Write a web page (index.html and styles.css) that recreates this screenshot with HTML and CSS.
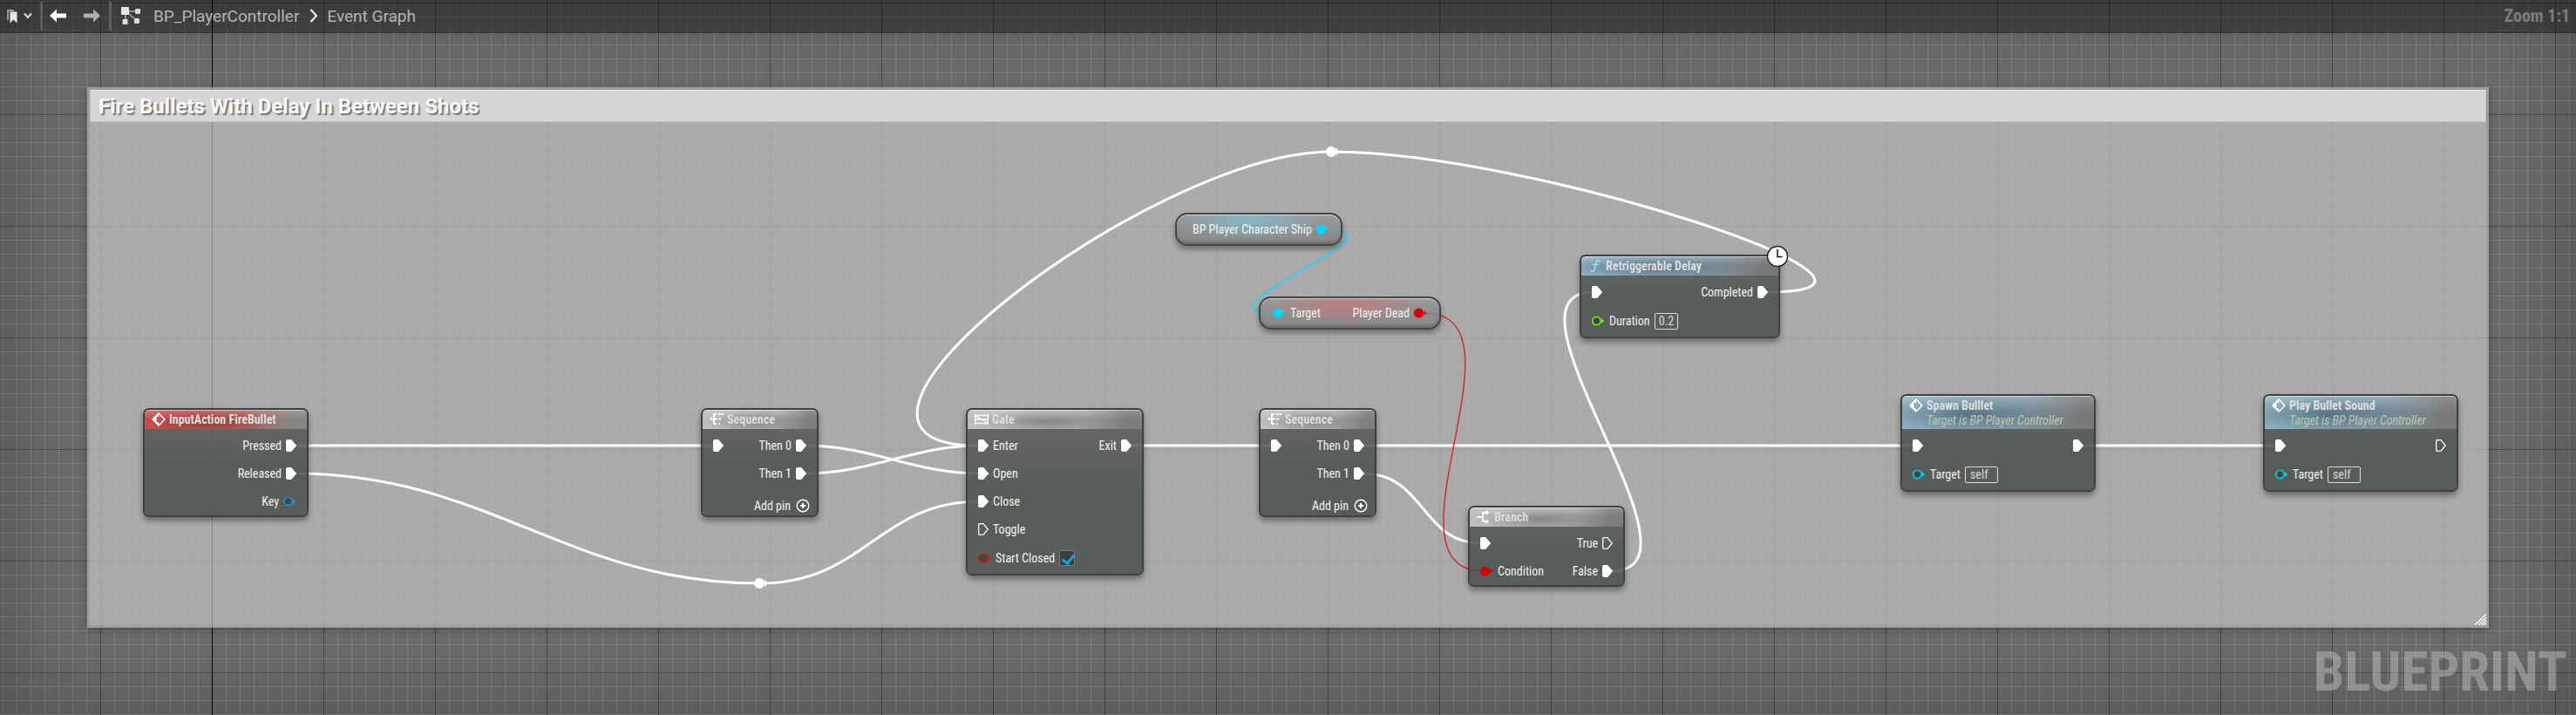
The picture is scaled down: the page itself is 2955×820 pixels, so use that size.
FILE: index.html
```html
<!DOCTYPE html>
<html lang="en">
<head>
<meta charset="utf-8">
<meta name="viewport" content="width=device-width, initial-scale=1">
<title>BP_PlayerController - Event Graph</title>
<link rel="stylesheet" href="styles.css">
</head>
<body>
<svg class="defs" aria-hidden="true">
  <symbol id="exec" viewBox="0 0 12 14"><path d="M1.6 0.5H6.2L11.6 7L6.2 13.5H1.6Q.5 13.5 .5 12.4V1.6Q.5 .5 1.6 .5Z" fill="#fff" stroke="#fff"/></symbol>
  <symbol id="exec-open" viewBox="0 0 12 14"><path d="M1.8 .7H6L11.2 7L6 13.3H1.8Q.7 13.3 .7 12.2V1.8Q.7 .7 1.8 .7Z" fill="none" stroke="#fff" stroke-width="1.3"/></symbol>
  <symbol id="data" viewBox="0 0 15 12"><circle cx="5.5" cy="6" r="4.6" fill="#3c4643" stroke="currentColor" stroke-width="1.8"/><path d="M11 3L14.5 6L11 9Z" fill="currentColor"/></symbol>
  <symbol id="data-on" viewBox="0 0 15 12"><circle cx="5.5" cy="6" r="5.5" fill="currentColor"/><path d="M11.6 3L14.5 6L11.6 9Z" fill="currentColor"/></symbol>
  <symbol id="event" viewBox="0 0 16 16"><path d="M8 1L15 8L8 15L1 8Z" fill="none" stroke="#fff" stroke-width="1.5" stroke-linejoin="round"/><path d="M8 1.2V5H5.6V11H8V14.8L1 8Z" fill="#fff"/><path d="M8 5L11 8L8 11Z" fill="#fff" opacity=".15"/></symbol>
  <symbol id="sequence" viewBox="0 0 16 16"><path d="M0 7.5H5M5 2H8M5 7.5H9M5 13H8M5 1V14M10 2H12.500M13.500 2H16M10.500 7.500H13M10 13H11.500" fill="none" stroke="#fff" stroke-width="2"/></symbol>
  <symbol id="gate" viewBox="0 0 16 16"><path d="M.7 2V14M15.300 2V14M.7 3.500H15.300M.7 12.500H15.300M.7 8H15.300M1 4L15 12" fill="none" stroke="#fff" stroke-width="1.300"/></symbol>
  <symbol id="branch" viewBox="0 0 16 16"><path d="M0 8H6M11 3H7V13H11" fill="none" stroke="#fff" stroke-width="2"/><path d="M10.500 0L14.500 3L10.500 6ZM10.500 10L14.500 13L10.500 16Z" fill="#fff"/></symbol>
  <symbol id="func" viewBox="0 0 16 16"><path d="M13 2.500C11 1 9.500 2 9 4.500L7.300 11.500C6.700 14 5 14.700 3.200 13.500M5 6.500H11.500" fill="none" stroke="#9fdcff" stroke-width="1.600" stroke-linecap="round"/></symbol>
  <symbol id="plus" viewBox="0 0 16 16"><circle cx="8" cy="8" r="6.800" fill="none" stroke="#fff" stroke-width="1.400"/><path d="M8 5V11M5 8H11" stroke="#fff" stroke-width="2"/></symbol>
</svg>

<div class="editor">
  <header class="toolbar">
    <button class="tool bookmarks" aria-label="Bookmarks">
      <svg width="12" height="17" viewBox="0 0 12 17"><path d="M0 1H8V3H2V12L0 14Z" fill="#9a9a9a"/><path d="M3.500 3.500H11.500V16.500L7.500 12.500L3.500 16.500Z" fill="#e8e8e8"/></svg>
      <svg width="10" height="8" viewBox="0 0 10 8"><path d="M1 1.500L5 6L9 1.500" fill="none" stroke="#e0e0e0" stroke-width="2"/></svg>
    </button>
    <span class="divider"></span>
    <button class="tool" aria-label="Back"><svg width="20" height="16" viewBox="0 0 20 16"><path d="M0 8L8 .5V5.500H19V10.500H8V15.500Z" fill="#fff"/></svg></button>
    <button class="tool" aria-label="Forward"><svg width="20" height="16" viewBox="0 0 20 16"><path d="M19 8L11 .5V5.500H0V10.500H11V15.500Z" fill="#b0b0b0"/></svg></button>
    <span class="divider"></span>
    <nav class="crumbs" aria-label="Breadcrumb">
      <svg width="22" height="20" viewBox="0 0 22 20"><path d="M5 5L19 5M5 5V17M6 5L18 16" stroke="#a8a8a8" stroke-width="1.500"/><rect width="9" height="9" rx="1" fill="#e6e6e6"/><rect x="16" y="2" width="6" height="6" rx="1" fill="#dcdcdc"/><rect x="1.500" y="14" width="6" height="6" rx="1" fill="#dcdcdc"/><rect x="15" y="13" width="6" height="6" rx="1" fill="#dcdcdc"/></svg>
      <a class="crumb" href="#">BP_PlayerController</a>
      <svg width="10" height="16" viewBox="0 0 10 16"><path d="M1.500 1L8 8L1.500 15" fill="none" stroke="#fff" stroke-width="2"/></svg>
      <a class="crumb" href="#">Event Graph</a>
    </nav>
    <span class="zoom">Zoom 1:1</span>
  </header>

  <main class="canvas">
    <section class="comment">
      <h1 class="comment-title">Fire Bullets With Delay In Between Shots</h1>
      <svg class="grip" width="13" height="13" viewBox="0 0 13 13"><path d="M0 13L13 0M4 13L13 4M7.500 13L13 7.500M10.500 13L13 10.500" stroke="#fff" stroke-width="1.300"/></svg>
    </section>

    <svg class="wires" aria-hidden="true">
      <g class="wire-exec">
        <path d="M338 511H820"/>
        <path d="M338 543C559 543 652 669 871 669"/>
        <path d="M871 669C992 669 1008 575 1124 575"/>
        <path d="M923 511C1000 511 1048 543 1124 543"/>
        <path d="M923 543C1000 543 1048 511 1124 511"/>
        <path d="M2028 335C2244 335 1757 174 1527 174"/>
        <path d="M1527 174C1320 174 882 511 1122 511"/>
        <path d="M1296 511H1460"/>
        <path d="M1563 511H2196"/>
        <path d="M1563 543C1636 543 1629 623 1700 623"/>
        <path d="M1848 655C1973 655 1705 335 1828 335"/>
        <path d="M2388 511H2612"/>
      </g>
      <path class="wire-bool" d="M1634 359C1760 359 1577 655 1702 655"/>
      <path class="wire-object" d="M1520 263C1627 263 1357 359 1462 359"/>
      <g class="knots"><circle cx="871" cy="669" r="6"/><path d="M877 664L880 669L877 674Z"/><circle cx="1527" cy="174" r="6"/><path d="M1533 169L1536 174L1533 179Z"/></g>
    </svg>

    <article class="node fire">
      <h2 class="head red"><svg class="icon"><use href="#event"/></svg>InputAction FireBullet</h2>
      <div class="body">
        <div class="col out">
          <div class="pin">Pressed<svg class="exec"><use href="#exec"/></svg></div>
          <div class="pin">Released<svg class="exec"><use href="#exec"/></svg></div>
          <div class="pin">Key<svg class="data blue"><use href="#data"/></svg></div>
        </div>
      </div>
    </article>

    <article class="node seq-a">
      <h2 class="head gray"><svg class="icon"><use href="#sequence"/></svg>Sequence</h2>
      <div class="body">
        <div class="col"><div class="pin"><svg class="exec"><use href="#exec"/></svg></div></div>
        <div class="col out">
          <div class="pin">Then 0<svg class="exec"><use href="#exec"/></svg></div>
          <div class="pin">Then 1<svg class="exec"><use href="#exec"/></svg></div>
          <button class="add">Add pin<svg class="icon"><use href="#plus"/></svg></button>
        </div>
      </div>
    </article>

    <article class="node gate">
      <h2 class="head gray"><svg class="icon"><use href="#gate"/></svg>Gate</h2>
      <div class="body">
        <div class="col">
          <div class="pin"><svg class="exec"><use href="#exec"/></svg>Enter</div>
          <div class="pin"><svg class="exec"><use href="#exec"/></svg>Open</div>
          <div class="pin"><svg class="exec"><use href="#exec"/></svg>Close</div>
          <div class="pin"><svg class="exec"><use href="#exec-open"/></svg>Toggle</div>
          <div class="pin value"><svg class="data dark-red"><use href="#data"/></svg><label for="closed">Start Closed</label><input class="check" id="closed" type="checkbox" checked></div>
        </div>
        <div class="col out"><div class="pin">Exit<svg class="exec"><use href="#exec"/></svg></div></div>
      </div>
    </article>

    <article class="pill ship">
      <div class="pin">BP Player Character Ship<svg class="data cyan"><use href="#data-on"/></svg></div>
    </article>

    <article class="pill dead">
      <div class="pin"><svg class="data cyan"><use href="#data-on"/></svg>Target</div>
      <div class="pin">Player Dead<svg class="data red-pin"><use href="#data-on"/></svg></div>
    </article>

    <article class="node seq-b">
      <h2 class="head gray"><svg class="icon"><use href="#sequence"/></svg>Sequence</h2>
      <div class="body">
        <div class="col"><div class="pin"><svg class="exec"><use href="#exec"/></svg></div></div>
        <div class="col out">
          <div class="pin">Then 0<svg class="exec"><use href="#exec"/></svg></div>
          <div class="pin">Then 1<svg class="exec"><use href="#exec"/></svg></div>
          <button class="add">Add pin<svg class="icon"><use href="#plus"/></svg></button>
        </div>
      </div>
    </article>

    <article class="node branch">
      <h2 class="head gray"><svg class="icon"><use href="#branch"/></svg>Branch</h2>
      <div class="body">
        <div class="col">
          <div class="pin"><svg class="exec"><use href="#exec"/></svg></div>
          <div class="pin"><svg class="data red-pin"><use href="#data-on"/></svg>Condition</div>
        </div>
        <div class="col out">
          <div class="pin">True<svg class="exec"><use href="#exec-open"/></svg></div>
          <div class="pin">False<svg class="exec"><use href="#exec"/></svg></div>
        </div>
      </div>
    </article>

    <article class="node delay">
      <h2 class="head blue-head"><svg class="icon"><use href="#func"/></svg>Retriggerable Delay</h2>
      <div class="body">
        <div class="col">
          <div class="pin"><svg class="exec"><use href="#exec"/></svg></div>
          <div class="pin value"><svg class="data green"><use href="#data"/></svg><label for="duration">Duration</label><input class="field number" id="duration" type="text" value="0.2"></div>
        </div>
        <div class="col out"><div class="pin">Completed<svg class="exec"><use href="#exec"/></svg></div></div>
      </div>
      <svg class="clock" width="26" height="26" viewBox="0 0 26 26"><circle cx="13" cy="13" r="11.500" fill="#fff" stroke="#222" stroke-width="1.500"/><path d="M13 5V13.500H18.500" fill="none" stroke="#111" stroke-width="1.500"/></svg>
    </article>

    <article class="node spawn">
      <h2 class="head tall blue-head"><svg class="icon"><use href="#event"/></svg>Spawn Bulllet<span class="sub">Target is BP Player Controller</span></h2>
      <div class="body">
        <div class="col">
          <div class="pin"><svg class="exec"><use href="#exec"/></svg></div>
          <div class="pin value"><svg class="data teal"><use href="#data"/></svg><label for="spawn-target">Target</label><input class="field" id="spawn-target" type="text" value="self"></div>
        </div>
        <div class="col out"><div class="pin"><svg class="exec"><use href="#exec"/></svg></div></div>
      </div>
    </article>

    <article class="node sound">
      <h2 class="head tall blue-head"><svg class="icon"><use href="#event"/></svg>Play Bullet Sound<span class="sub">Target is BP Player Controller</span></h2>
      <div class="body">
        <div class="col">
          <div class="pin"><svg class="exec"><use href="#exec"/></svg></div>
          <div class="pin value"><svg class="data teal"><use href="#data"/></svg><label for="sound-target">Target</label><input class="field" id="sound-target" type="text" value="self"></div>
        </div>
        <div class="col out"><div class="pin"><svg class="exec"><use href="#exec-open"/></svg></div></div>
      </div>
    </article>

    <div class="vignette"></div>
    <p class="watermark">BLUEPRINT</p>
  </main>
</div>
</body>
</html>
```

FILE: styles.css
```css
* { box-sizing: border-box; }

body {
  margin: 0;
  font-family: "Roboto Condensed", Roboto, sans-serif;
  font-size: 14px;
  color: #f2f2f2;
}

.defs { position: absolute; width: 0; height: 0; }

svg { display: block; flex: none; }

button {
  padding: 0;
  border: 0;
  background: none;
  color: inherit;
  font: inherit;
}

.editor {
  position: relative;
  min-height: 100vh;
  background-color: #6b6b6b;
  background-image:
    linear-gradient(#000, #000),
    linear-gradient(to right, #4b4b4b 1px, transparent 1px),
    linear-gradient(#4b4b4b 1px, transparent 1px),
    linear-gradient(to right, #7e7e7e 1px, transparent 1px),
    linear-gradient(#7e7e7e 1px, transparent 1px);
  background-size: 1px 100%, 128px 128px, 128px 128px, 16px 16px, 16px 16px;
  background-position: 243px 0, 115px 3px, 115px 3px, 3px 3px, 3px 3px;
  background-repeat: no-repeat, repeat, repeat, repeat, repeat;
  overflow: hidden;
}

/* Toolbar */
.toolbar {
  position: relative;
  z-index: 2;
  display: flex;
  align-items: center;
  height: 38px;
  padding: 0 7px 2px 8px;
  background: rgba(0, 0, 0, .36);
  box-shadow: inset 0 -2px rgba(0, 0, 0, .15);
}

.tool { display: flex; align-items: center; }
.bookmarks { gap: 7px; }
.divider { width: 3px; height: 33px; margin: 0 8px 0 9px; background: #5e5e5e; }
.tool + .tool { margin-left: 19px; }
.crumbs { display: flex; align-items: center; gap: 10px; margin-left: 3px; }
.crumb { color: #b4b4b4; font-family: Roboto, sans-serif; font-size: 19px; text-decoration: none; }
.crumb:first-of-type { margin: 0 2px 0 5px; }
.zoom { margin-left: auto; color: #7c7c7c; font-size: 20px; font-weight: 700; }

/* Graph canvas */
.canvas { position: absolute; inset: 0; }

.comment {
  position: absolute;
  left: 100px;
  top: 100px;
  width: 2755px;
  height: 620px;
  border: 3px solid rgba(180, 180, 180, .7);
  background: rgba(197, 197, 197, .7);
  background-clip: padding-box;
  box-shadow: 0 2px 8px rgba(0, 0, 0, .35);
}

.comment-title {
  margin: 0;
  padding: 1px 9px 0;
  border: 1px solid #c6c6c6;
  border-top-color: #e6e6e6;
  border-radius: 2px 2px 0 0;
  background: #d6d6d6;
  color: #f8f8f8;
  font-family: Roboto, sans-serif;
  font-size: 24px;
  line-height: 34px;
  text-shadow: 2px 2px 1px #777;
}

.grip { position: absolute; right: 0; bottom: 0; }

.wires { position: absolute; inset: 0; width: 100%; height: 100%; overflow: visible; fill: none; }
.wire-exec { stroke: #fff; stroke-width: 3; }
.wire-bool { stroke: #c92f2f; stroke-width: 1.5; }
.wire-object { stroke: #35cdf5; stroke-width: 2; }
.knots { fill: #fff; }

/* Nodes */
.node {
  position: absolute;
  border: 2px solid #3d403e;
  border-radius: 7px;
  background: linear-gradient(rgba(88, 90, 87, .82), rgba(75, 80, 76, .86) 50%, rgba(75, 80, 76, .86));
  background-clip: padding-box;
  box-shadow: 0 4px 7px rgba(0, 0, 0, .4);
}

.fire { left: 164px; top: 468px; width: 190px; }
.seq-a { left: 804px; top: 468px; width: 135px; }
.gate { left: 1108px; top: 468px; width: 204px; }
.seq-b { left: 1444px; top: 468px; width: 135px; }
.branch { left: 1684px; top: 580px; width: 180px; }
.delay { left: 1812px; top: 292px; width: 230px; }
.spawn { left: 2180px; top: 452px; width: 224px; }
.sound { left: 2596px; top: 452px; width: 224px; }

.head {
  position: relative;
  display: flex;
  flex-wrap: wrap;
  align-items: center;
  column-gap: 4px;
  height: 22px;
  margin: 0;
  padding: 0 8px;
  border-radius: 5px 5px 0 0;
  box-shadow: inset 0 1px rgba(255, 255, 255, .5);
  color: #dedede;
  font-size: 14px;
  font-weight: 700;
  line-height: 22px;
  white-space: nowrap;
}

.icon { width: 16px; height: 16px; }
.tall { height: 38px; align-content: flex-start; }
.tall .icon { margin: 3px 0; }
.sub {
  width: 100%;
  padding-left: 20px;
  color: #bfc7ae;
  font-weight: 400;
  font-style: italic;
  line-height: 12px;
}

.red {
  background:
    linear-gradient(rgba(255, 255, 255, .18), transparent 50%),
    radial-gradient(ellipse 45% 70% at 40% 60%, rgba(110, 40, 40, .6), transparent),
    linear-gradient(100deg, #cc5050 20%, #bd6060 55%, #858783 90%);
}
.gray {
  background:
    linear-gradient(rgba(255, 255, 255, .12), transparent 50%),
    radial-gradient(ellipse 45% 60% at 45% 60%, rgba(90, 90, 90, .5), transparent),
    linear-gradient(110deg, #bfbfbf 20%, #adadad 65%, #7c7e7b 90%);
}
.blue-head {
  background:
    linear-gradient(rgba(255, 255, 255, .15), transparent 50%),
    radial-gradient(ellipse 50% 65% at 35% 55%, rgba(60, 85, 98, .65), transparent),
    linear-gradient(110deg, #92b5c8 20%, #8aa6b5 55%, #787a78 90%);
}

.body { display: flex; justify-content: space-between; padding: 3px 12px 0; }
.col { display: flex; flex-direction: column; }
.out { align-items: flex-end; margin-left: auto; }
.pin { display: flex; align-items: center; gap: 5px; height: 32px; white-space: nowrap; }
.value { height: 34px; margin-bottom: 1px; }
.exec { width: 12px; height: 14px; }
.data { width: 15px; height: 12px; }
.add { display: flex; align-items: center; gap: 6px; height: 23px; margin: 9px -4px 0 0; }

.blue { color: #2b8bce; }
.cyan { color: #0ad4fb; }
.teal { color: #16bfe6; }
.green { color: #7ae01c; }
.red-pin { color: #cc0505; }
.dark-red { color: #c01616; }

.field {
  width: 38px;
  height: 19px;
  padding: 0 5px;
  border: 1px solid #dcdcdc;
  border-radius: 2px;
  background: transparent;
  color: #d8d8d8;
  font: inherit;
}
.number { width: 27px; padding: 0 4px; }

.check {
  appearance: none;
  width: 18px;
  height: 18px;
  margin: 0;
  border: 1px solid #7c7c7c;
  border-radius: 2px;
  background: #3b3d3c;
}
.check:checked::before {
  content: "";
  display: block;
  width: 6px;
  height: 11px;
  margin: 1px 0 0 5px;
  border: solid #12a3ee;
  border-width: 0 3px 3px 0;
  transform: rotate(38deg);
}

.clock { position: absolute; right: -12px; top: -13px; }

/* Variable nodes */
.pill {
  position: absolute;
  display: flex;
  align-items: center;
  justify-content: space-between;
  height: 38px;
  border: 2px solid #454545;
  border-radius: 14px;
  background-clip: padding-box;
  box-shadow: 0 4px 6px rgba(0, 0, 0, .35), inset 0 1px 1px rgba(255, 255, 255, .6), inset 0 -3px 3px rgba(0, 0, 0, .18);
}
.ship {
  left: 1348px;
  top: 244px;
  width: 192px;
  padding: 0 14px 0 18px;
  background:
    radial-gradient(ellipse 45% 70% at 45% 20%, rgba(125, 200, 225, .65), transparent),
    linear-gradient(rgba(150, 150, 150, .8), rgba(125, 125, 125, .8));
}
.dead {
  left: 1444px;
  top: 340px;
  width: 209px;
  padding: 0 14px;
  background:
    radial-gradient(ellipse 45% 70% at 48% 20%, rgba(210, 110, 110, .6), transparent),
    linear-gradient(rgba(150, 150, 150, .8), rgba(125, 125, 125, .8));
}

.vignette {
  position: absolute;
  inset: 0;
  box-shadow: inset 0 0 100px rgba(0, 0, 0, .28);
  pointer-events: none;
}

.watermark {
  position: absolute;
  right: 10px;
  bottom: 12px;
  margin: 0;
  color: rgba(190, 190, 190, .5);
  font-size: 63px;
  font-weight: 700;
  line-height: 74px;
}
```
